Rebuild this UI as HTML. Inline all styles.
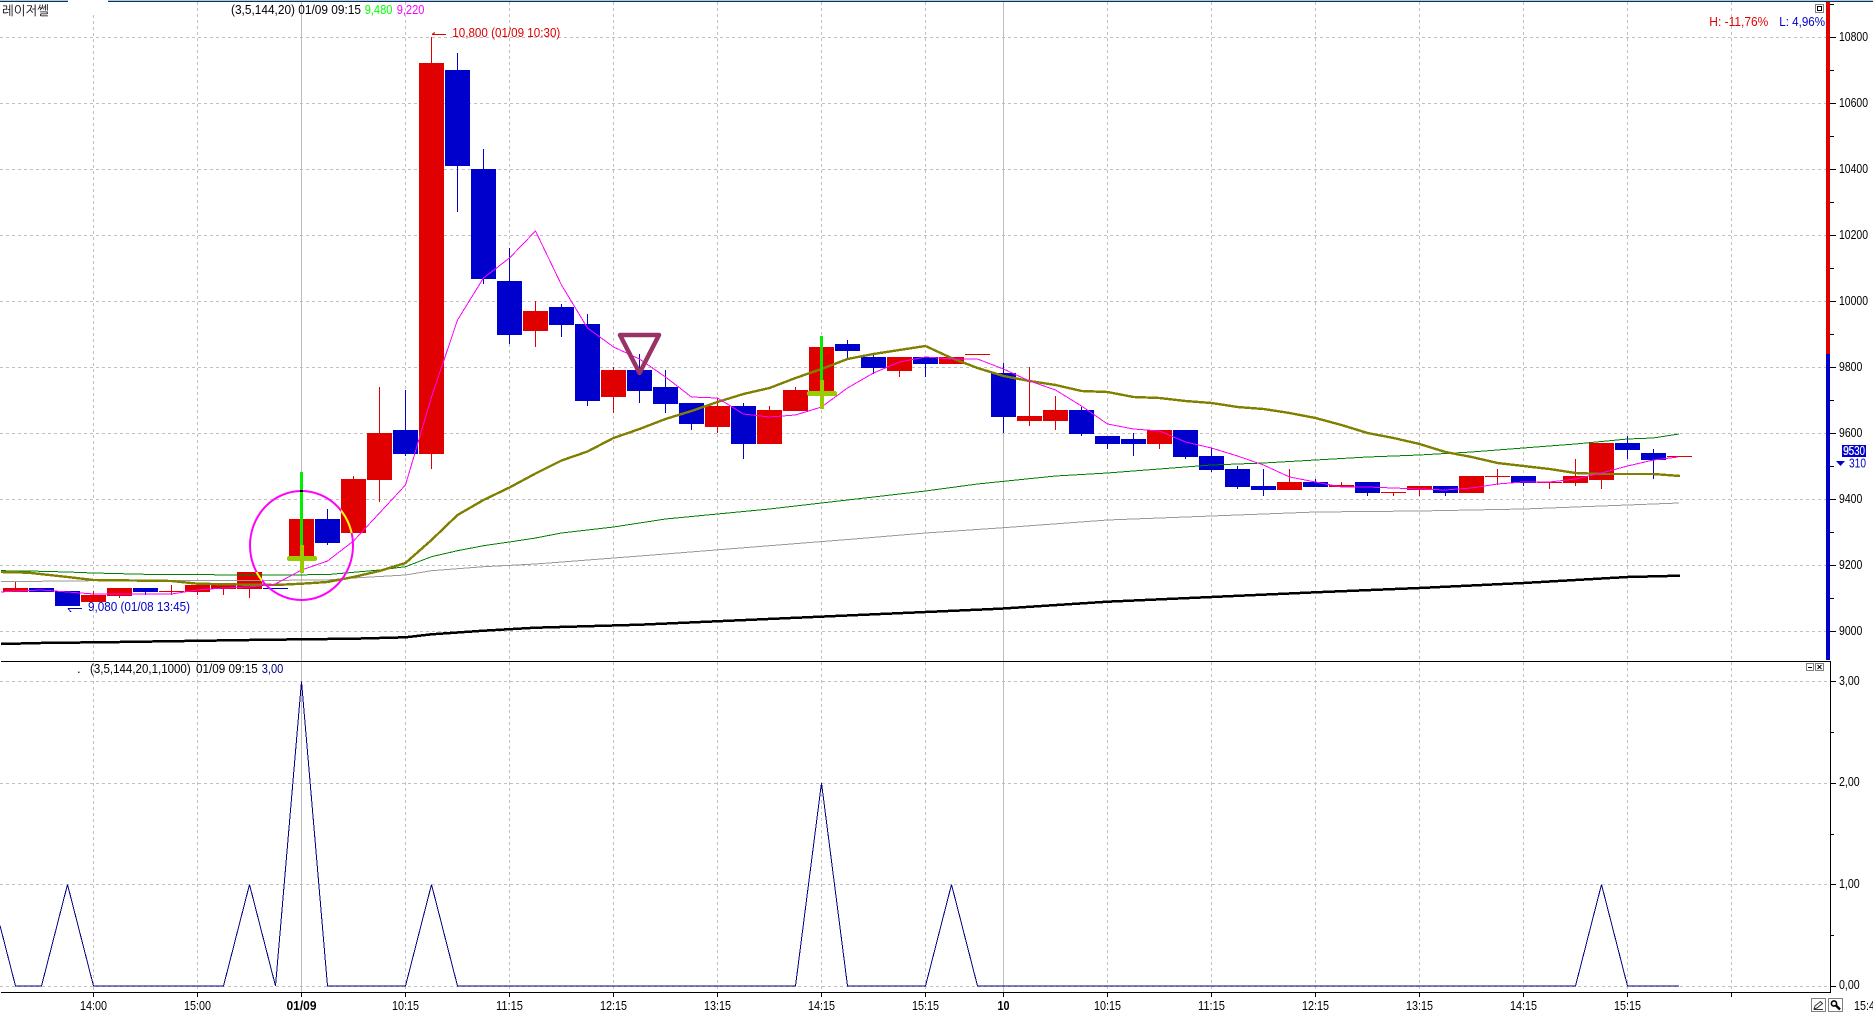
<!DOCTYPE html>
<html lang="ko">
<head>
<meta charset="utf-8">
<title>Chart</title>
<style>
html,body{margin:0;padding:0;background:#fff;overflow:hidden}
svg{display:block}
text{font-family:"Liberation Sans","NanumGothic","Noto Sans CJK KR",sans-serif;font-size:13px;fill:#000}
.ln{fill:none;shape-rendering:crispEdges}
.cr{shape-rendering:crispEdges}
</style>
</head>
<body>
<svg xmlns="http://www.w3.org/2000/svg" width="1873" height="1013" viewBox="0 0 1873 1013">
<rect width="1873" height="1013" fill="#fff"/>

<!-- top border -->
<rect x="0" y="0" width="68" height="1" fill="#a6caf0" class="cr"/>
<rect x="0" y="1" width="68" height="1" fill="#1a2f50" class="cr"/>
<rect x="108" y="0" width="1765" height="1" fill="#a6caf0" class="cr"/>
<rect x="108" y="1" width="1765" height="1" fill="#1a2f50" class="cr"/>

<!-- horizontal grid -->
<path class="ln" stroke="#c0c0c0" stroke-dasharray="3 3" d="M0 37.5H1826M0 103.5H1826M0 169.5H1826M0 235.5H1826M0 301.5H1826M0 367.5H1826M0 433.5H1826M0 499.5H1826M0 565.5H1826M0 631.5H1826M0 681.5H1830M0 783.5H1830M0 884.5H1830M0 986.5H1830"/>
<!-- vertical grid -->
<path class="ln" stroke="#c0c0c0" stroke-dasharray="3 3" d="M93.5 15V992M197.5 2V992M405.5 2V992M509.5 2V992M613.5 2V992M717.5 2V992M821.5 2V992M925.5 2V992M1107.5 2V992M1211.5 2V992M1315.5 2V992M1419.5 2V992M1523.5 2V992M1627.5 2V992M1731.5 2V992"/>
<path class="ln" stroke="#bdbdbd" stroke-width="1" d="M301.5 2V992M1003.5 2V992"/>

<!-- wicks -->
<path class="ln" stroke="#e00000" d="M15.5 582V590M93.5 591V600M119.5 590V598M171.5 585V595M197.5 586V595M223.5 586V595M249.5 575V598M353.5 476V500M379.5 387V502M431.5 37V469M535.5 301V347M613.5 367V413M717.5 398V433M769.5 406V420M795.5 387V400M899.5 360V377M1029.5 367V426M1055.5 396V430M1159.5 435V449M1289.5 469V485M1341.5 482V487M1393.5 492V496M1419.5 488V496M1497.5 469V485M1549.5 482V489M1575.5 459V486M1601.5 460V489"/>
<path class="ln" stroke="#0000cc" d="M145.5 590V595M327.5 509V545M405.5 390V456M457.5 53V212M483.5 149V284M509.5 248V344M561.5 304V337M587.5 314V406M639.5 354V403M665.5 370V413M691.5 410V430M743.5 403V459M847.5 340V358M873.5 354V374M925.5 360V377M1003.5 363V433M1081.5 407V436M1107.5 440V449M1133.5 433V456M1185.5 440V459M1211.5 448V472M1237.5 466V489M1263.5 469V496M1315.5 479V485M1367.5 488V496M1445.5 490V496M1523.5 480V486M1627.5 436V459M1653.5 449V479"/>

<!-- red bodies -->
<path class="cr" fill="#e00000" d="M3 588h25v4h-25zM81 595h25v7h-25zM107 588h25v8h-25zM159 591h25v1h-25zM185 585h25v7h-25zM211 585h25v4h-25zM237 572h25v17h-25zM289 519h25v38h-25zM341 479h25v54h-25zM367 433h25v47h-25zM419 63h25v391h-25zM523 311h25v20h-25zM601 370h25v27h-25zM705 406h25v21h-25zM757 410h25v34h-25zM783 390h25v21h-25zM809 347h25v47h-25zM887 357h25v14h-25zM939 357h25v7h-25zM965 354h25v1h-25zM1017 416h25v5h-25zM1043 410h25v11h-25zM1147 430h25v14h-25zM1277 482h25v8h-25zM1329 485h25v2h-25zM1381 492h25v1h-25zM1407 486h25v4h-25zM1459 476h25v17h-25zM1485 476h25v1h-25zM1537 482h25v1h-25zM1563 476h25v7h-25zM1589 443h25v37h-25zM1667 456h25v1h-25z"/>
<!-- blue bodies -->
<path class="cr" fill="#0000cc" d="M29 588h25v4h-25zM55 591h25v15h-25zM133 588h25v4h-25zM263 588h25v1h-25zM315 519h25v24h-25zM393 430h25v24h-25zM445 70h25v96h-25zM471 169h25v110h-25zM497 281h25v54h-25zM549 307h25v18h-25zM575 324h25v77h-25zM627 370h25v21h-25zM653 387h25v17h-25zM679 403h25v21h-25zM731 406h25v38h-25zM835 344h25v7h-25zM861 357h25v11h-25zM913 357h25v7h-25zM991 373h25v44h-25zM1069 410h25v24h-25zM1095 436h25v8h-25zM1121 439h25v5h-25zM1173 430h25v27h-25zM1199 456h25v14h-25zM1225 469h25v18h-25zM1251 486h25v4h-25zM1303 482h25v5h-25zM1355 482h25v11h-25zM1433 486h25v7h-25zM1511 476h25v7h-25zM1615 443h25v7h-25zM1641 453h25v7h-25z"/>

<!-- moving averages -->
<polyline class="ln" stroke="#000" stroke-width="2.5" points="1,644 41,643 120,642 249.5,640 301.5,639.3 354,638.7 405.5,637.3 431.5,634.3 483.5,630.7 535.5,627.7 640,624.7 1000,608.7 1107.5,601.7 1211.5,597 1315.5,592.3 1419.5,588 1523.5,583 1627.5,577 1680,575.7"/>
<polyline class="ln" stroke="#999" stroke-width="1" points="1,581.7 93.5,580.7 223.5,580.7 326.5,580 353.5,578 405.5,575 431.5,570.7 483.5,566.7 535.5,564 640,556 854,539 925.5,533 1003.5,527.7 1107.5,520 1211.5,516 1315.5,512 1419.5,511 1523.5,509 1627.5,505 1679,503"/>
<polyline class="ln" stroke="#008000" stroke-width="1" points="1,570.7 28.5,571 67.5,572 93.5,573 145.5,574.3 197.5,574.3 223.5,575 326.5,574.7 353.5,572.3 379.5,570 405.5,566.7 431.5,556.7 457.5,550.7 483.5,545.7 509.5,542 535.5,538 561.5,533 613.5,527 665.5,519 717.5,514 769.5,509 821.5,503 873.5,497 925.5,491 977.5,484 1055.5,476 1107.5,473 1159.5,469 1211.5,465 1263.5,463 1315.5,460 1367.5,457 1419.5,455 1471.5,452 1523.5,448 1575.5,444 1627.5,439 1653,438 1679,434"/>
<polyline class="ln" stroke="#808000" stroke-width="2.4" points="1,572 28.5,572.7 67.5,577 93.5,580 171.5,581 197.5,583.7 249.5,584.7 275.5,585 301.5,583.7 327.5,582 353.5,577 379.5,571 405.5,563 431.5,540 457.5,515 483.5,500 509.5,487.5 535.5,473.5 561.5,460.5 587.5,451.5 613.5,438 639.5,429 665.5,419 691.5,411 717.5,402 743.5,394 769.5,388 795.5,378 821.5,369 847.5,359 873.5,354 899.5,350 925.5,346 951.5,358 977.5,368 1003.5,376 1029.5,381 1055.5,385 1081.5,391 1107.5,392 1133.5,397 1159.5,398 1185.5,401 1211.5,403 1237.5,407 1263.5,409 1289.5,413 1315.5,418 1341.5,425 1367.5,433 1393.5,438 1419.5,444 1445.5,452 1471.5,457 1497.5,463 1523.5,466 1549.5,469 1575.5,473 1601.5,474 1627.5,474 1653.5,474 1680,476"/>
<polyline class="ln" stroke="#ff00ff" stroke-width="1" points="1,592 15.5,591 41.5,590 67.5,592 93.5,594 171.5,594 197.5,590 223.5,588 249.5,587 275.5,584 301.5,570 327.5,561 353.5,541 379.5,513 405.5,485 431.5,397 457.5,320 483.5,278 509.5,258 535.5,231 561.5,285 587.5,328 613.5,347 639.5,359 665.5,377 691.5,397 717.5,398 743.5,414 769.5,417 795.5,415 821.5,407 847.5,388 873.5,373 899.5,362 925.5,357 951.5,359 977.5,359 1003.5,369 1029.5,381 1055.5,390 1081.5,406 1107.5,424 1133.5,429 1159.5,431 1185.5,442 1211.5,448 1237.5,456 1263.5,465 1289.5,477 1315.5,482 1341.5,487 1367.5,487 1393.5,488 1419.5,489 1445.5,490 1471.5,488 1497.5,484 1523.5,482 1549.5,482 1575.5,479 1601.5,473 1627.5,466 1653.5,460 1678,457"/>

<!-- circle -->
<ellipse cx="301.5" cy="545.5" rx="51.5" ry="54.5" fill="none" stroke="#ff00ff" stroke-width="2"/>
<clipPath id="yc"><rect x="341" y="479" width="25" height="54"/><rect x="237" y="572" width="25" height="17"/></clipPath>
<ellipse cx="301.5" cy="545.5" rx="51.5" ry="54.5" fill="none" stroke="#ffff00" stroke-width="2" clip-path="url(#yc)"/>

<!-- triangle -->
<path d="M620 335H659L639.5 373Z" fill="none" stroke="#993366" stroke-width="4.5" stroke-linejoin="round"/>

<!-- signal 1 -->
<rect x="300" y="472" width="3" height="74" fill="#00ee00" class="cr"/>
<rect x="300" y="490" width="3" height="2" fill="#000" class="cr"/>
<rect x="300" y="545" width="4" height="28" fill="#99cc00" class="cr"/>
<rect x="287" y="556" width="30" height="5" rx="2" fill="#99cc00" class="cr"/>
<!-- signal 2 -->
<rect x="820" y="336" width="3" height="45" fill="#00ee00" class="cr"/>
<rect x="820" y="380" width="4" height="29" fill="#99cc00" class="cr"/>
<rect x="807" y="391" width="30" height="5" rx="2" fill="#99cc00" class="cr"/>

<!-- high/low arrows -->
<path class="ln" stroke="#e00000" d="M446 34.5H432M432 34.5L435 32.5"/>
<path class="ln" stroke="#0000cc" d="M82 608.5H68M68 608.5L71 612"/>

<!-- indicator line -->
<polyline class="ln" stroke="#000080" stroke-width="1" points="0,925.5 15.5,986 41.5,986 67.5,884.5 93.5,986 223.5,986 249.5,884.5 275.5,986 301.5,681.5 327.5,986 405.5,986 431.5,884.5 457.5,986 795.5,986 821.5,783 847.5,986 925.5,986 951.5,884.5 977.5,986 1575.5,986 1601.5,884.5 1627.5,986 1679,986"/>

<!-- right bar and axes -->
<rect x="1826" y="2" width="4" height="352" fill="#e00000" class="cr"/>
<rect x="1826" y="354" width="4" height="306" fill="#0000cc" class="cr"/>
<rect x="1" y="661" width="1830" height="1" fill="#000" class="cr"/>
<rect x="1" y="992" width="1830" height="1" fill="#000" class="cr"/>
<rect x="1830" y="661" width="1" height="332" fill="#000" class="cr"/>
<path class="ln" stroke="#000" d="M1830 4.5H1834M1830 37.5H1836M1830 70.5H1834M1830 103.5H1836M1830 136.5H1834M1830 169.5H1836M1830 202.5H1834M1830 235.5H1836M1830 268.5H1834M1830 301.5H1836M1830 334.5H1834M1830 367.5H1836M1830 400.5H1834M1830 433.5H1836M1830 466.5H1834M1830 499.5H1836M1830 532.5H1834M1830 565.5H1836M1830 598.5H1834M1830 631.5H1836M1830 681.5H1836M1830 732.5H1834M1830 783.5H1836M1830 834.5H1834M1830 884.5H1836M1830 935.5H1834M1830 986.5H1836"/>
<path class="ln" stroke="#000" d="M93.5 992V997M197.5 992V997M301.5 992V997M405.5 992V997M509.5 992V997M613.5 992V997M717.5 992V997M821.5 992V997M925.5 992V997M1003.5 992V997M1107.5 992V997M1211.5 992V997M1315.5 992V997M1419.5 992V997M1523.5 992V997M1627.5 992V997M1731.5 992V997"/>

<!-- header text -->
<text x="2" y="15" textLength="47" lengthAdjust="spacingAndGlyphs">레이저쎌</text>
<text x="231" y="14" textLength="130" lengthAdjust="spacingAndGlyphs">(3,5,144,20) 01/09 09:15</text>
<text x="364.7" y="14" textLength="27.7" lengthAdjust="spacingAndGlyphs" style="fill:#00ff00">9,480</text>
<text x="396.7" y="14" textLength="27.7" lengthAdjust="spacingAndGlyphs" style="fill:#ff00ff">9,220</text>
<text x="452.3" y="37" textLength="108" lengthAdjust="spacingAndGlyphs" style="fill:#e00000">10,800 (01/09 10:30)</text>
<text x="88" y="611" textLength="102" lengthAdjust="spacingAndGlyphs" style="fill:#0000cc">9,080 (01/08 13:45)</text>
<text x="1709.3" y="26" textLength="59" lengthAdjust="spacingAndGlyphs" style="fill:#e00000">H: -11,76%</text>
<text x="1779.3" y="26" textLength="45.7" lengthAdjust="spacingAndGlyphs" style="fill:#0000cc">L: 4,96%</text>

<!-- lower panel header -->
<text x="77" y="673">.</text>
<text x="90" y="673" textLength="100.7" lengthAdjust="spacingAndGlyphs">(3,5,144,20,1,1000)</text>
<text x="196" y="673" textLength="61.7" lengthAdjust="spacingAndGlyphs">01/09 09:15</text>
<text x="261.7" y="673" textLength="21.6" lengthAdjust="spacingAndGlyphs" style="fill:#000080">3,00</text>

<!-- price labels -->
<text x="1839" y="41" textLength="29" lengthAdjust="spacingAndGlyphs">10800</text>
<text x="1839" y="107" textLength="29" lengthAdjust="spacingAndGlyphs">10600</text>
<text x="1839" y="173" textLength="29" lengthAdjust="spacingAndGlyphs">10400</text>
<text x="1839" y="239" textLength="29" lengthAdjust="spacingAndGlyphs">10200</text>
<text x="1839" y="305" textLength="29" lengthAdjust="spacingAndGlyphs">10000</text>
<text x="1839" y="371" textLength="23.3" lengthAdjust="spacingAndGlyphs">9800</text>
<text x="1839" y="437" textLength="23.3" lengthAdjust="spacingAndGlyphs">9600</text>
<text x="1839" y="503" textLength="23.3" lengthAdjust="spacingAndGlyphs">9400</text>
<text x="1839" y="569" textLength="23.3" lengthAdjust="spacingAndGlyphs">9200</text>
<text x="1839" y="635" textLength="23.3" lengthAdjust="spacingAndGlyphs">9000</text>
<text x="1839" y="685" textLength="20.7" lengthAdjust="spacingAndGlyphs">3,00</text>
<text x="1839" y="786" textLength="20.7" lengthAdjust="spacingAndGlyphs">2,00</text>
<text x="1839" y="888" textLength="20.7" lengthAdjust="spacingAndGlyphs">1,00</text>
<text x="1839" y="989" textLength="20.7" lengthAdjust="spacingAndGlyphs">0,00</text>

<!-- current price -->
<rect x="1842" y="445" width="24" height="12" fill="#0000cc" class="cr"/>
<text x="1843" y="455" textLength="22" lengthAdjust="spacingAndGlyphs" style="fill:#fff">9530</text>
<text x="1844" y="455" textLength="21" lengthAdjust="spacingAndGlyphs" style="fill:#fff;opacity:.6">9530</text>
<path d="M1836 461h9l-4.5 5z" fill="#0000cc"/>
<text x="1849" y="467.5" textLength="17" lengthAdjust="spacingAndGlyphs" style="fill:#0000cc">310</text>

<!-- time labels -->
<text x="80" y="1010" textLength="27" lengthAdjust="spacingAndGlyphs">14:00</text>
<text x="184" y="1010" textLength="27" lengthAdjust="spacingAndGlyphs">15:00</text>
<text x="286.5" y="1010" textLength="30" lengthAdjust="spacingAndGlyphs" font-weight="bold">01/09</text>
<text x="392" y="1010" textLength="27" lengthAdjust="spacingAndGlyphs">10:15</text>
<text x="496" y="1010" textLength="27" lengthAdjust="spacingAndGlyphs">11:15</text>
<text x="600" y="1010" textLength="27" lengthAdjust="spacingAndGlyphs">12:15</text>
<text x="704" y="1010" textLength="27" lengthAdjust="spacingAndGlyphs">13:15</text>
<text x="808" y="1010" textLength="27" lengthAdjust="spacingAndGlyphs">14:15</text>
<text x="912" y="1010" textLength="27" lengthAdjust="spacingAndGlyphs">15:15</text>
<text x="997.5" y="1010" textLength="12" lengthAdjust="spacingAndGlyphs" font-weight="bold">10</text>
<text x="1094" y="1010" textLength="27" lengthAdjust="spacingAndGlyphs">10:15</text>
<text x="1198" y="1010" textLength="27" lengthAdjust="spacingAndGlyphs">11:15</text>
<text x="1302" y="1010" textLength="27" lengthAdjust="spacingAndGlyphs">12:15</text>
<text x="1406" y="1010" textLength="27" lengthAdjust="spacingAndGlyphs">13:15</text>
<text x="1510" y="1010" textLength="27" lengthAdjust="spacingAndGlyphs">14:15</text>
<text x="1614" y="1010" textLength="27" lengthAdjust="spacingAndGlyphs">15:15</text>
<text x="1854" y="1010" textLength="21" lengthAdjust="spacingAndGlyphs">15:4</text>

<!-- small buttons -->
<rect x="1815.5" y="4.5" width="8" height="8" fill="#fff" stroke="#808080" class="cr"/>
<rect x="1817.5" y="6.5" width="4" height="4" fill="none" stroke="#000" class="cr"/>
<rect x="1806.5" y="663.5" width="7" height="7" fill="#fff" stroke="#808080" class="cr"/>
<path class="ln" stroke="#000" d="M1808 667.5H1812"/>
<rect x="1815.5" y="663.5" width="8" height="7" fill="#fff" stroke="#808080" class="cr"/>
<path fill="none" stroke="#000" d="M1817.5 665L1821.5 669M1821.5 665L1817.5 669"/>

<rect x="1811.5" y="998.5" width="14" height="13" fill="#fff" stroke="#808080" class="cr"/>
<path fill="none" stroke="#333" stroke-width="1" d="M1814 1009L1815 1006L1820.5 1001.5L1822.5 1003.5L1817 1008ZM1814 1009.5H1823"/>
<rect x="1828.5" y="998.5" width="14" height="13" fill="#fff" stroke="#808080" class="cr"/>
<circle cx="1834" cy="1003.5" r="2.6" fill="none" stroke="#000" stroke-width="1.6"/>
<path d="M1836 1005.5L1840 1009.5" stroke="#000" stroke-width="2.4" fill="none"/>
</svg>
</body>
</html>
